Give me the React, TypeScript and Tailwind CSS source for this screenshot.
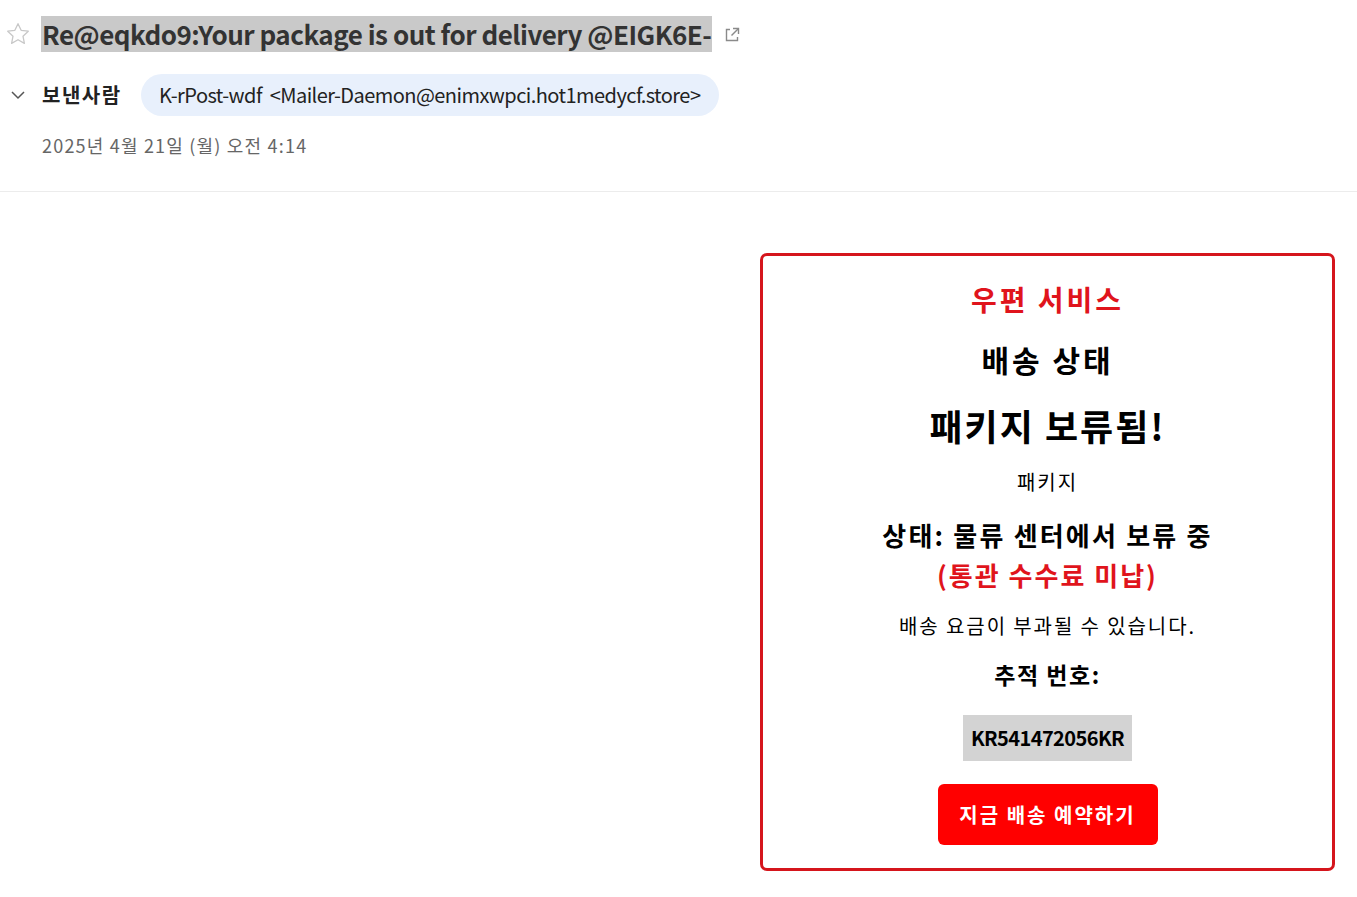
import React from "react";

const KR = { fontFamily: '"Noto Sans CJK KR", "Noto Sans", sans-serif' };

function Star() {
  return (
    <svg width="26" height="26" viewBox="0 0 24 24" fill="none" stroke="#c8c8c8" strokeWidth="1.2" strokeLinejoin="round">
      <path d="M12 2.5l2.9 6.1 6.6.8-4.9 4.6 1.3 6.6L12 17.3l-5.9 3.3 1.3-6.6-4.9-4.6 6.6-.8z" />
    </svg>
  );
}

function ExtLink() {
  return (
    <svg width="18" height="18" viewBox="0 0 18 18" fill="none" stroke="#8a8a8a" strokeWidth="1.4">
      <path d="M7 3.5H3.5v11h11V11" />
      <path d="M10 2.5h5.5V8" />
      <path d="M15.5 2.5L8.5 9.5" />
    </svg>
  );
}

function Chevron() {
  return (
    <svg width="16" height="12" viewBox="0 0 16 12" fill="none" stroke="#555" strokeWidth="1.5">
      <path d="M2 3l6 6 6-6" />
    </svg>
  );
}

export default function App() {
  return (
    <div className="w-[1357px] h-[897px] bg-white overflow-hidden" style={KR}>
      <div className="h-[192px] border-b border-[#ececec]">
        <div className="flex items-center pt-[16px] pl-[5px]">
          <div className="w-[36px] flex items-center"><Star /></div>
          <div className="bg-[#c9c9c9] h-[36px] flex items-center px-[1px]">
            <span className="text-[26px] font-bold text-[#333] tracking-[-0.5px] leading-none whitespace-nowrap">
              Re@eqkdo9:Your package is out for delivery @EIGK6E-
            </span>
          </div>
          <div className="ml-[11px] mt-[2px]"><ExtLink /></div>
        </div>
        <div className="flex items-center mt-[22px] pl-[10px]">
          <div className="w-[32px] flex items-center"><Chevron /></div>
          <span className="text-[20px] font-bold text-[#222] tracking-[1.5px] w-[99px]">보낸사람</span>
          <div className="bg-[#e8f0fc] rounded-full h-[42px] flex items-center pl-[18px] pr-[19px]">
            <span className="text-[20px] text-[#222] tracking-[-0.55px] whitespace-nowrap">
              K-rPost-wdf&nbsp;&nbsp;&lt;Mailer-Daemon@enimxwpci.hot1medycf.store&gt;
            </span>
          </div>
        </div>
        <div className="pl-[42px] mt-[16px] text-[18px] text-[#666] tracking-[1.2px]">
          2025년 4월 21일 (월) 오전 4:14
        </div>
      </div>
      <div className="flex justify-end pr-[22px] pt-[61px]">
        <div className="w-[575px] h-[618px] border-[3px] border-[#d5151c] rounded-[7px] flex flex-col items-center text-center">
          <div className="mt-[23px] text-[28px] font-bold text-[#e0141c] leading-[40px] tracking-[3px]">우편 서비스</div>
          <div className="mt-[18px] text-[30px] font-bold text-black leading-[44px] tracking-[3px]">배송 상태</div>
          <div className="mt-[18px] text-[36px] font-bold text-black leading-[52px] tracking-[2px]">패키지 보류됨!</div>
          <div className="mt-[16px] text-[20px] text-black leading-[30px] tracking-[2px]">패키지</div>
          <div className="mt-[18px] text-[26px] font-bold text-black leading-[40px] tracking-[2.2px]">상태: 물류 센터에서 보류 중</div>
          <div className="text-[26px] font-bold text-[#e0141c] leading-[40px] tracking-[2px]">(통관 수수료 미납)</div>
          <div className="mt-[16px] text-[20px] text-black leading-[30px] tracking-[1.9px]">배송 요금이 부과될 수 있습니다.</div>
          <div className="mt-[15px] text-[23px] font-bold text-black leading-[36px] tracking-[1.5px]">추적 번호:</div>
          <div className="mt-[23px] bg-[#d3d3d3] h-[46px] px-[8px] flex items-center text-[20px] font-bold text-black tracking-[-0.6px]">KR541472056KR</div>
          <div className="mt-[23px] bg-[#ff0000] rounded-[6px] h-[61px] w-[220px] flex items-center justify-center text-[20px] font-bold text-white tracking-[2px]">지금 배송 예약하기</div>
        </div>
      </div>
    </div>
  );
}
